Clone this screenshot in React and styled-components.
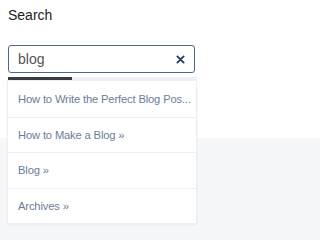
import React, { useState } from 'react'
import styled, { createGlobalStyle } from 'styled-components'

const GlobalStyle = createGlobalStyle`
  html, body {
    margin: 0;
    padding: 0;
    background: #f6f7f9;
    font-family: "Liberation Sans", Arial, sans-serif;
  }
`

const Page = styled.div`
  width: 100%;
  height: 229px;
  overflow: hidden;
  display: flex;
  flex-direction: column;
`

const Widget = styled.div`
  background: #fff;
  height: 138px;
  padding: 6px 8px 0 8px;
  box-sizing: border-box;
`

const Rest = styled.div`
  flex: 1;
  background: #f6f7f9;
`

const Title = styled.h3`
  margin: 0;
  font-size: 14px;
  font-weight: 400;
  color: #222;
  line-height: 18px;
`

const SearchBox = styled.div`
  position: relative;
  margin-top: 21px;
  width: 187px;
`

const InputWrap = styled.div`
  display: flex;
  align-items: center;
  height: 28px;
  border: 1.5px solid #4d6799;
  border-radius: 3px;
  padding: 0 9px 0 9px;
  background: #fff;
  box-sizing: border-box;
`

const Input = styled.input`
  flex: 1;
  min-width: 0;
  border: none;
  outline: none;
  font-family: inherit;
  font-size: 14px;
  color: #555;
  padding: 0;
  background: transparent;
`

const Clear = styled.button`
  border: none;
  background: none;
  padding: 0;
  display: flex;
  cursor: pointer;
`

const Progress = styled.div`
  height: 3px;
  margin-top: 4px;
  background: #eef0f4;
  width: 189px;
  & > div {
    height: 100%;
    background: #3a3d44;
  }
`

const Results = styled.ul`
  position: absolute;
  top: 35px;
  left: -1px;
  width: 190px;
  margin: 0;
  padding: 0;
  list-style: none;
  background: #fff;
  border: 1px solid #eceef2;
  box-shadow: 0 1px 2px rgba(0, 0, 0, 0.05);
  box-sizing: border-box;
`

const Result = styled.li`
  height: 35.6px;
  display: flex;
  align-items: center;
  padding: 0 2px 0 10px;
  border-top: ${(p) => (p.first ? 'none' : '1px solid #eceef2')};
  font-size: 11.2px;
  letter-spacing: -0.15px;
  color: #6a7d98;
  white-space: nowrap;
  box-sizing: border-box;
`

const results = [
  'How to Write the Perfect Blog Pos...',
  'How to Make a Blog »',
  'Blog »',
  'Archives »',
]

export default function App() {
  const [query, setQuery] = useState('blog')

  return (
    <>
      <GlobalStyle />
      <Page>
        <Widget>
          <Title>Search</Title>
          <SearchBox>
            <InputWrap>
              <Input value={query} onChange={(e) => setQuery(e.target.value)} />
              <Clear onClick={() => setQuery('')}>
                <svg width="9" height="9" viewBox="0 0 10 10">
                  <path d="M1.5 1.5 L8.5 8.5 M8.5 1.5 L1.5 8.5" stroke="#1f3864" strokeWidth="2" strokeLinecap="round" />
                </svg>
              </Clear>
            </InputWrap>
            <Progress>
              <div style={{ width: '34%' }} />
            </Progress>
            <Results>
              {results.map((r, i) => (
                <Result key={r} first={i === 0}>{r}</Result>
              ))}
            </Results>
          </SearchBox>
        </Widget>
        <Rest />
      </Page>
    </>
  )
}
